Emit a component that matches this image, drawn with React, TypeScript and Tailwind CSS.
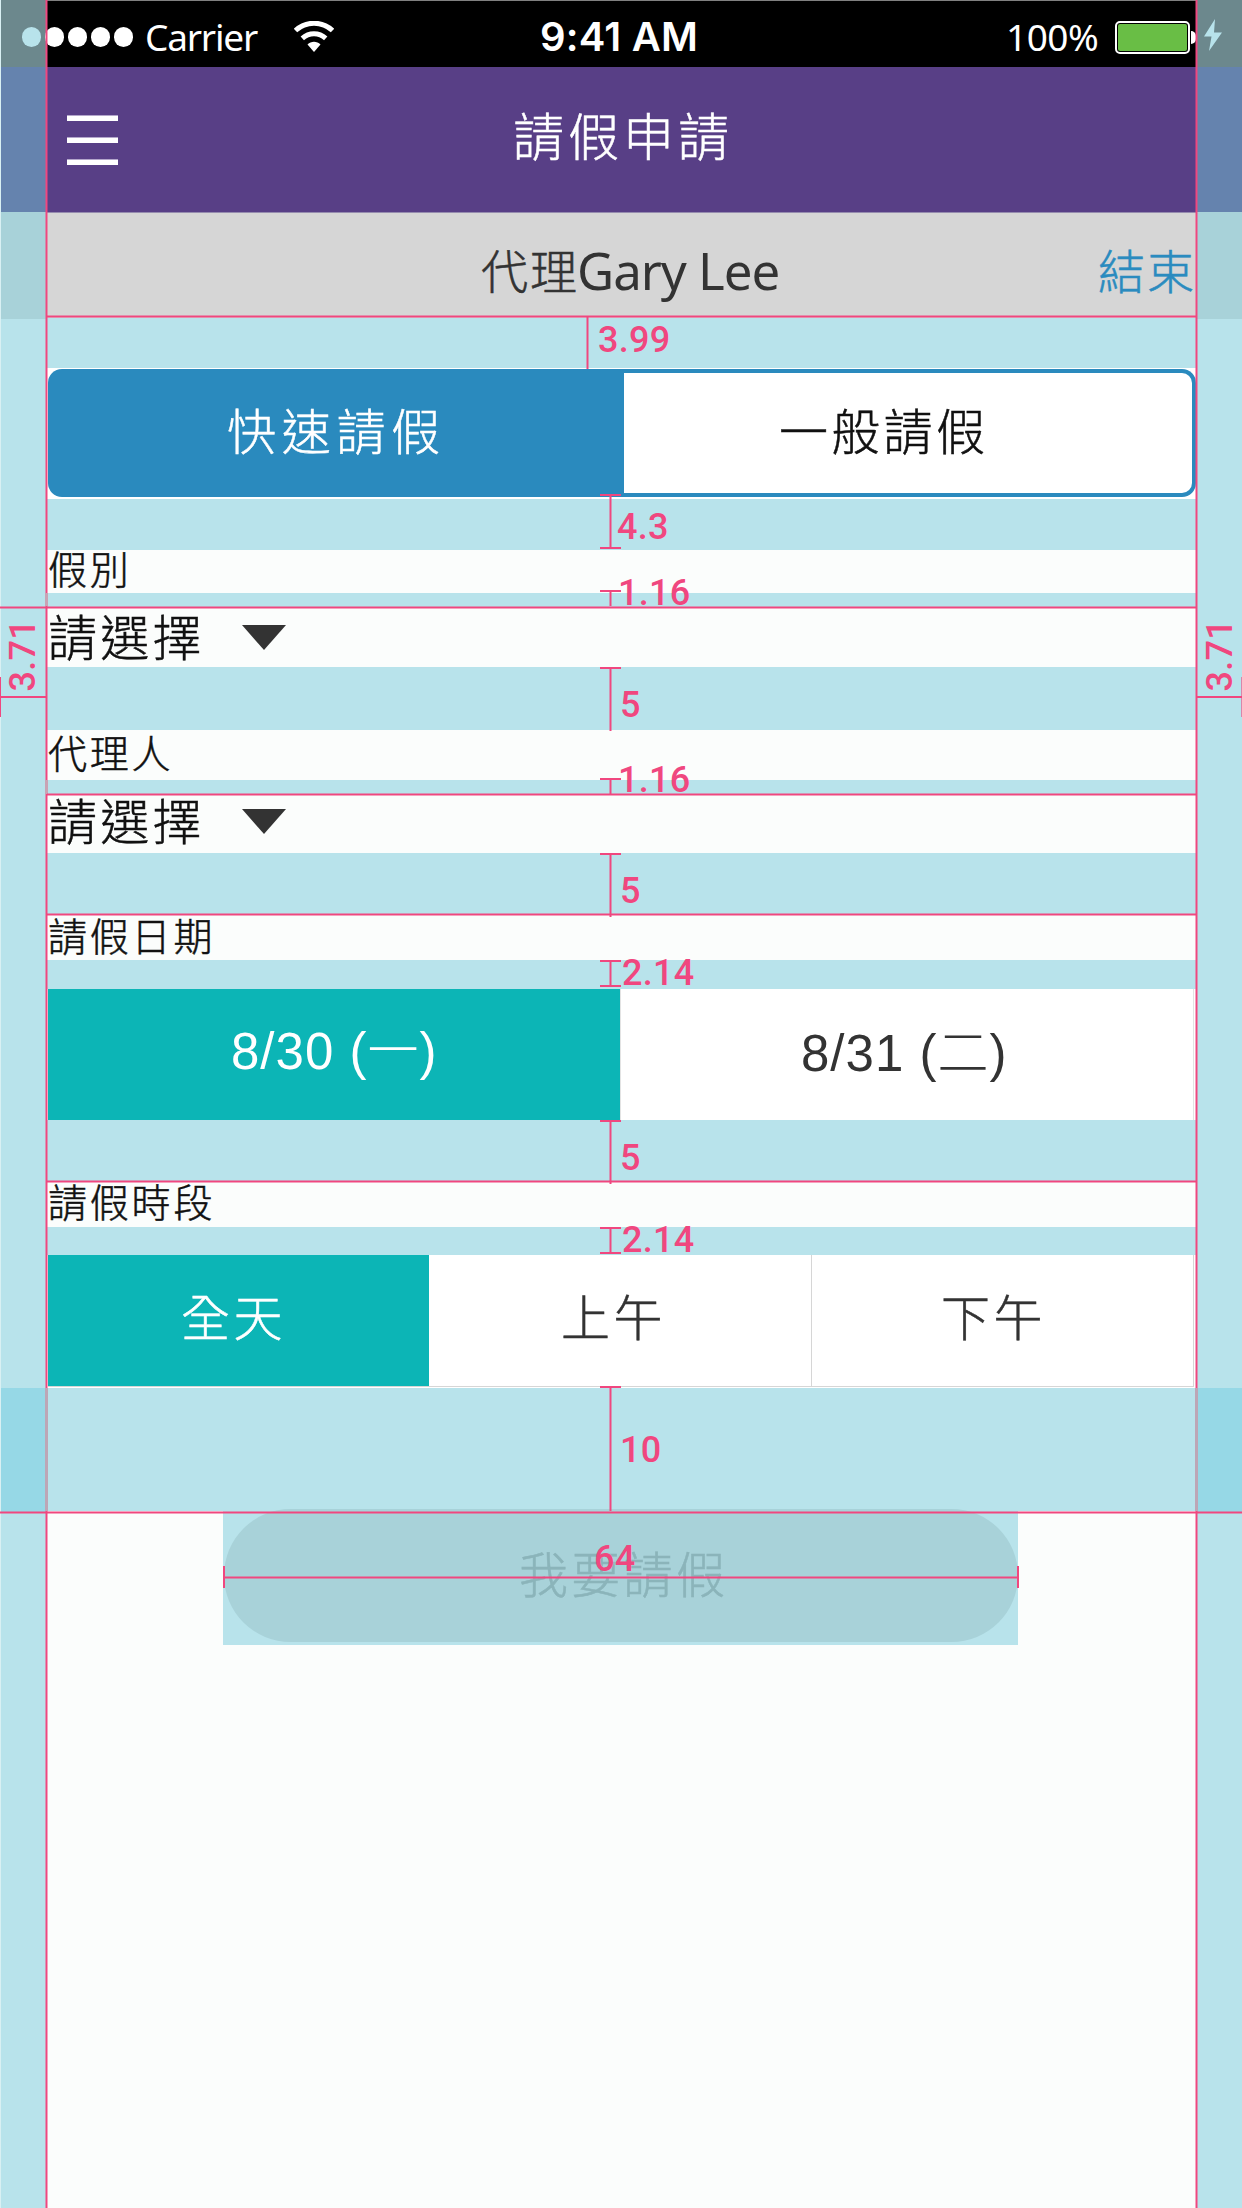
import type { ReactNode } from "react";

const CJK =
  "font-['Noto_Sans_CJK_TC',sans-serif] font-light leading-none whitespace-nowrap [-webkit-text-stroke:0.5px_currentColor]";

function SideStrip({ children, side }: { children: ReactNode; side: "left" | "right" }) {
  return (
    <aside
      className={`flex w-[47px] shrink-0 flex-col bg-[#b8e3eb] ${side === "left" ? "border-l border-[#d9f0f3]" : ""}`}
    >
      <div className="h-[67px] bg-[#6c888d]">{children}</div>
      <div className="h-[145px] bg-[#6583ae]" />
      <div className="h-[107px] bg-[#a8d2d9]" />
      <div className="h-[1069px]" />
      <div className="h-[124px] bg-[#96d8e6]" />
    </aside>
  );
}

function Wifi() {
  return (
    <svg className="ml-[37px] mt-[21px] h-[31px] w-[40px]" viewBox="0 0 40 31" fill="none">
      <path d="M1.5 9.5C12 -.2 28 -.2 38.500 9.500" stroke="#fff" strokeWidth="5" />
      <path d="M8.300 17.300C15 11.200 25 11.200 31.700 17.300" stroke="#fff" strokeWidth="5" />
      <path d="M13.500 23.500C17 19.900 23 19.900 26.500 23.500L20 31Z" fill="#fff" />
    </svg>
  );
}

function StatusBar() {
  return (
    <div className="flex h-[67px] shrink-0 border-t border-[#808080] bg-black text-white">
      <div className="-ml-[2px] flex w-[86px] shrink-0 gap-[4px] pt-[26px]">
        <i className="h-[20px] w-[19px] shrink-0 rounded-full bg-white" />
        <i className="h-[20px] w-[19px] shrink-0 rounded-full bg-white" />
        <i className="h-[20px] w-[19px] shrink-0 rounded-full bg-white" />
        <i className="h-[20px] w-[19px] shrink-0 rounded-full bg-white" />
      </div>
      <div className="ml-[14px] w-[112px] pt-[16px] font-['Noto_Sans',sans-serif] text-[37px] leading-[40px] tracking-[-1.2px] whitespace-nowrap">
        Carrier
      </div>
      <div className="-mt-px flex">
        <Wifi />
      </div>
      <div className="ml-[206px] w-[159px] pt-[15px] font-['Inter',sans-serif] text-[40px] leading-[42px] font-semibold tracking-[0.2px] whitespace-nowrap">
        9:41 AM
      </div>
      <div className="ml-[307px] w-[109px] pt-[16px] font-['Noto_Sans',sans-serif] text-[37px] leading-[40px] tracking-[-0.5px] whitespace-nowrap">
        100%
      </div>
      <div className="mt-[20px] flex h-[33px] w-[75px] shrink-0 rounded-[5px] border-2 border-white p-px">
        <div className="flex-1 rounded-[2px] bg-[#69be45]" />
      </div>
      <div className="mt-[30px] ml-px h-[13px] w-[5px] shrink-0 rounded-r-full bg-white" />
    </div>
  );
}

function Gap({ className }: { className: string }) {
  return <div className={`shrink-0 bg-[#b8e3eb] ${className}`} />;
}

function Label({ children, className }: { children: ReactNode; className: string }) {
  return (
    <div className={`shrink-0 pl-px text-[39px] tracking-[2.8px] text-[#111] ${CJK} ${className}`}>
      {children}
    </div>
  );
}

function Select({ className }: { className: string }) {
  return (
    <div className={`flex shrink-0 items-start ${className}`}>
      <span className={`-mt-px w-[195px] pl-px text-[49px] tracking-[3.3px] text-[#111] ${CJK}`}>請選擇</span>
      <svg className="mt-[14px] h-[25px] w-[44px]" viewBox="0 0 44 25">
        <path d="M0 0H44L22 25Z" fill="#333" />
      </svg>
    </div>
  );
}

function VMeasure({ className, start = true, end = false }: { className: string; start?: boolean; end?: boolean }) {
  return (
    <div className={`absolute left-[600px] flex w-[21px] flex-col items-center ${className}`}>
      {start && <i className="h-[2px] w-full bg-[#f0477f]" />}
      <i className="w-[3px] flex-1 border-x border-[#f0477f]/50 bg-[#f0477f] bg-clip-padding" />
      {end && <i className="h-[2px] w-full bg-[#f0477f]" />}
    </div>
  );
}

function Num({ children, className }: { children: ReactNode; className: string }) {
  return (
    <span
      className={`absolute font-['Roboto',sans-serif] text-[36px] leading-[36px] font-medium tracking-[0.3px] whitespace-nowrap text-[#f0477f] ${className}`}
    >
      {children}
    </span>
  );
}

function Guides() {
  const v = "absolute w-[3px] border-x border-[#f0477f]/50 bg-[#f0477f] bg-clip-padding";
  const h = "absolute h-[3px] border-y border-[#f0477f]/50 bg-[#f0477f] bg-clip-padding";
  const solid = "absolute bg-[#f0477f]";
  return (
    <div className="pointer-events-none absolute inset-0 overflow-hidden">
      <i className={`${v} top-0 left-[45px] h-[593px]`} />
      <i className={`${v} top-[606px] left-[45px] h-[174px]`} />
      <i className={`${v} top-[794px] left-[45px] h-[594px]`} />
      <i className={`${v} top-[1511px] left-[45px] h-[697px]`} />
      <i className={`${v} top-0 left-[1195px] h-[1388px]`} />
      <i className={`${v} top-[1511px] left-[1195px] h-[697px]`} />
      <i className="absolute top-[593px] left-[45px] h-[13px] w-[3px] bg-[#c9a3b4]" />
      <i className="absolute top-[780px] left-[45px] h-[14px] w-[3px] bg-[#c9a3b4]" />
      <i className="absolute top-[1388px] left-[45px] h-[123px] w-[3px] bg-[#bda6b6]" />
      <i className="absolute top-[1388px] left-[1195px] h-[123px] w-[3px] bg-[#bda6b6]" />
      <i className={`${h} top-[315px] left-[47px] w-[1149px]`} />
      <i className={`${h} top-[606px] left-0 w-[1196px]`} />
      <i className={`${h} top-[793px] left-[47px] w-[1149px]`} />
      <i className={`${h} top-[913px] left-[47px] w-[1149px]`} />
      <i className={`${h} top-[1180px] left-[47px] w-[1149px]`} />
      <i className={`${h} top-[1511px] left-0 w-full`} />

      <i className={`${v} top-[317px] left-[586px] h-[52px]`} />
      <VMeasure className="top-[494px] h-[55px]" end />
      <VMeasure className="top-[590px] h-[16px]" />
      <VMeasure className="top-[667px] h-[64px]" />
      <VMeasure className="top-[778px] h-[16px]" />
      <VMeasure className="top-[853px] h-[64px]" />
      <VMeasure className="top-[960px] h-[27px]" end />
      <VMeasure className="top-[1120px] h-[64px]" />
      <VMeasure className="top-[1227px] h-[27px]" end />
      <VMeasure className="top-[1386px] h-[125px]" />

      <i className={`${h} top-[1576px] left-[224px] w-[794px]`} />
      <i className={`${solid} top-[1566px] left-[223px] h-[22px] w-[2px]`} />
      <i className={`${solid} top-[1566px] left-[1017px] h-[22px] w-[2px]`} />
      <i className={`${solid} top-[696px] left-0 h-[2px] w-[46px]`} />
      <i className={`${solid} top-[677px] left-0 h-[40px] w-px`} />
      <i className={`${solid} top-[696px] left-[1197px] h-[2px] w-[45px]`} />
      <i className="absolute top-[677px] left-[1241px] h-[40px] w-px bg-[#f0477f]/60" />

      <Num className="top-[322px] left-[598px]">3.99</Num>
      <Num className="top-[509px] left-[617px]">4.3</Num>
      <Num className="top-[575px] left-[618px]">1.16</Num>
      <Num className="top-[687px] left-[620px]">5</Num>
      <Num className="top-[762px] left-[618px]">1.16</Num>
      <Num className="top-[873px] left-[620px]">5</Num>
      <Num className="top-[955px] left-[622px]">2.14</Num>
      <Num className="top-[1140px] left-[620px]">5</Num>
      <Num className="top-[1222px] left-[622px]">2.14</Num>
      <Num className="top-[1432px] left-[620px]">10</Num>
      <Num className="top-[1541px] left-[594px]">64</Num>
      <Num className="top-[619px] left-[5px] rotate-180 [writing-mode:vertical-rl]">3.71</Num>
      <Num className="top-[619px] left-[1202px] rotate-180 [writing-mode:vertical-rl]">3.71</Num>
    </div>
  );
}

export default function App() {
  return (
    <div className="relative flex h-[2208px] w-[1242px] overflow-hidden bg-[#fbfdfc]">
      <SideStrip side="left">
        <i className="ml-[21px] block h-full w-[19px] pt-[27px]">
          <i className="block h-[20px] w-[19px] rounded-full bg-[#b8e3eb]" />
        </i>
      </SideStrip>

      <main className="flex w-[1149px] shrink-0 flex-col">
        <StatusBar />
        <header className="flex h-[145px] shrink-0 bg-[#583f86]">
          <div className="ml-[20px] flex w-[51px] flex-col gap-[16px] pt-[48px]">
            <i className="h-[6px] border-t border-[#b3a6cb] bg-white" />
            <i className="h-[6px] border-t border-[#b3a6cb] bg-white" />
            <i className="h-[6px] border-t border-[#b3a6cb] bg-white" />
          </div>
          <h1 className={`ml-[395px] pt-[42px] text-[51px] tracking-[4px] text-white ${CJK}`}>請假申請</h1>
        </header>
        <div className="flex h-[106px] shrink-0 border-t border-[#968caf] bg-[#d6d6d6]">
          <span className={`ml-[434px] pt-[32px] text-[47px] tracking-[2px] text-[#333] ${CJK}`}>代理</span>
          <span className="-ml-[2px] w-[522px] pt-[27px] font-['Noto_Sans',sans-serif] text-[51px] leading-[60px] tracking-[-1px] whitespace-nowrap text-[#333]">
            Gary Lee
          </span>
          <span className={`pt-[32px] text-[47px] tracking-[2px] text-[#2a8bbf] ${CJK}`}>結束</span>
        </div>
        <Gap className="h-[50px]" />
        <div className="h-[131px] shrink-0 bg-white pt-px">
          <div className="flex h-[128px] pl-px">
            <div
              className={`w-[576px] rounded-l-[14px] bg-[#2a8abe] pt-[35px] pl-[179px] text-[49px] tracking-[5.7px] text-white ${CJK}`}
            >
              快速請假
            </div>
            <div
              className={`flex-1 rounded-r-[14px] border-4 border-l-0 border-[#2a8abe] bg-white pt-[31px] pl-[155px] text-[49px] tracking-[3.300px] text-[#111] ${CJK}`}
            >
              一般請假
            </div>
          </div>
        </div>
        <Gap className="h-[51px]" />
        <Label className="h-[43px]">
          <span className="-mt-[2px] block">假別</span>
        </Label>
        <Gap className="h-[14px]" />
        <Select className="h-[60px] pt-[4px]" />
        <Gap className="h-[63px]" />
        <Label className="h-[50px] pt-[2px]">代理人</Label>
        <Gap className="h-[15px]" />
        <Select className="h-[58px]" />
        <Gap className="h-[61px]" />
        <Label className="h-[46px] pt-[1px]">請假日期</Label>
        <Gap className="h-[29px]" />
        <div className="flex h-[131px] shrink-0 bg-white pl-px text-[51px] tracking-[1px]">
          <div className="w-[572px] bg-[#0cb5b6] pt-[33px] pl-[183px] font-['Liberation_Sans','Noto_Sans_CJK_TC',sans-serif] leading-[60px] font-light whitespace-nowrap text-white">
            8/30 (一)
          </div>
          <div className="w-[574px] border-x border-[#e3e3e3] pt-[35px] pl-[180px] font-['Liberation_Sans','Noto_Sans_CJK_TC',sans-serif] leading-[60px] font-light whitespace-nowrap text-[#333]">
            8/31 (二)
          </div>
        </div>
        <Gap className="h-[61px]" />
        <Label className="h-[46px]">請假時段</Label>
        <Gap className="h-[28px]" />
        <div
          className={`flex h-[133px] shrink-0 bg-white pr-[2px] pb-px pl-px text-[49px] tracking-[3.500px] text-[#333] ${CJK}`}
        >
          <div className="w-[381px] border-b border-[#d6d6d6] bg-[#0cb5b6] pt-[35px] pl-[133px] text-white">全天</div>
          <div className="w-[383px] border-r border-b border-[#d6d6d6] pt-[35px] pl-[132px]">上午</div>
          <div className="flex-1 border-r border-b border-[#d6d6d6] pt-[35px] pl-[129px]">下午</div>
        </div>
        <Gap className="h-[123px]" />
        <div className="-mt-[2px] ml-[176px] h-[136px] w-[795px] shrink-0 bg-[#b8e3eb]">
          <div
            className={`ml-px h-[133px] rounded-full bg-[#a8d2d9] pt-[38px] pl-[295px] text-[49px] tracking-[3.300px] text-[#8bb4ba] ${CJK}`}
          >
            我要請假
          </div>
        </div>
      </main>

      <SideStrip side="right">
        <svg className="ml-[8px] block h-[51px] w-[18px] pt-[19px]" viewBox="0 0 18 32">
          <path d="M11 0L0 17.500H7.500L5 32L18 13.500H10Z" fill="#b8e3eb" />
        </svg>
      </SideStrip>
      <Guides />
    </div>
  );
}
